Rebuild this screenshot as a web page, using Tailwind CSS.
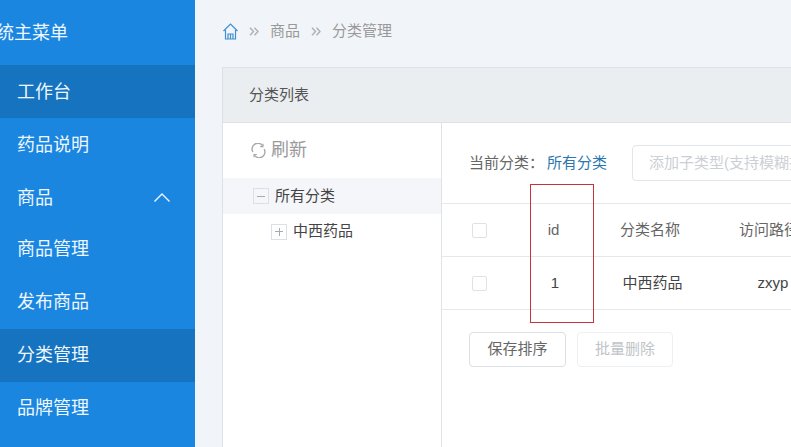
<!DOCTYPE html>
<html lang="zh">
<head>
<meta charset="utf-8">
<script src="https://cdn.jsdelivr.net/npm/@tailwindcss/browser@4"></script>
</head>
<body class="m-0 overflow-hidden">
<div class="relative flex w-[791px] h-[447px] overflow-hidden bg-[#f1f4f8] font-['Liberation_Sans','Noto_Sans_CJK_SC',sans-serif]">
  <aside class="w-[195px] shrink-0 bg-[#1a86e0] text-[#eef7ff] text-lg overflow-hidden">
    <div class="h-[65px] flex items-center justify-end pr-[127px] whitespace-nowrap text-[18px]">系统主菜单</div>
    <div class="h-[53px] flex items-center pl-[17px] bg-[#1573bf]">工作台</div>
    <div class="h-[53px] flex items-center pl-[17px]">药品说明</div>
    <div class="h-[53px] flex items-center justify-between pl-[17px] pr-[25px]">
      <span>商品</span>
      <svg width="16" height="9" viewBox="0 0 16 9" fill="none" stroke="#eef7ff" stroke-width="1.4"><path d="M0.5 8.5L8 1l7.5 7.5"/></svg>
    </div>
    <div class="h-[53px] pb-1 flex items-center pl-[17px]">商品管理</div>
    <div class="h-[52px] pb-[2px] flex items-center pl-[17px]">发布商品</div>
    <div class="h-[53px] pb-[2px] flex items-center pl-[17px] bg-[#1573bf]">分类管理</div>
    <div class="h-[53px] pb-[2px] flex items-center pl-[17px]">品牌管理</div>
  </aside>
  <main class="flex-1 min-w-0 pl-[27px]">
    <nav class="h-[67px] pb-[4px] flex items-center text-[15px] text-[#999999] whitespace-nowrap">
      <svg class="ml-[1px] mr-[11px]" width="15" height="17" viewBox="0 0 15 17" fill="none" stroke="#3f8fd2" stroke-width="1.2"><path d="M0.5 8L7.5 1l7 7"/><path d="M2.5 7v9h10V7"/><path d="M5 16v-5h5v5M7.5 11v5"/></svg>
      <svg class="mr-[11px]" width="10" height="9" viewBox="0 0 10 9" fill="none" stroke="#b0b0b0" stroke-width="1.4"><path d="M1 0.8L4.5 4.5 1 8.2M5.5 0.8L9 4.5 5.5 8.2"/></svg>
      <span>商品</span>
      <svg class="mx-[11px]" width="10" height="9" viewBox="0 0 10 9" fill="none" stroke="#b0b0b0" stroke-width="1.4"><path d="M1 0.8L4.5 4.5 1 8.2M5.5 0.8L9 4.5 5.5 8.2"/></svg>
      <span>分类管理</span>
    </nav>
    <section class="w-[620px] h-[380px] border-l border-t border-[#dde2e7] bg-white">
      <header class="h-[55px] pl-[26px] flex items-center bg-[#eaeef1] border-b border-[#dde2e7] text-[15px] text-[#555555]">分类列表</header>
      <div class="flex h-[325px]">
        <div class="w-[219px] shrink-0 border-r border-[#dde2e7]">
          <div class="h-[55px] pl-[28px] pb-[1px] flex items-center gap-[5px] text-[#9a9a9a] text-[18px]">
            <svg width="15" height="15" viewBox="0 0 16 16" fill="none" stroke="#a8a8a8" stroke-width="1.5"><path d="M2 9.5A6 6 0 0 1 12.5 3.2"/><path d="M14 6.5A6 6 0 0 1 3.5 12.8"/><path d="M12.8 0.8v3h-3M3.2 15.2v-3h3" stroke-width="1.2"/></svg>
            <span>刷新</span>
          </div>
          <div class="h-9 pl-[30px] flex items-center gap-[6px] bg-[#f4f6f9] text-[15px] text-[#444444]">
            <span class="w-4 h-4 border border-[#dcdfe3] flex items-center justify-center"><span class="w-2 h-px bg-[#aaaaaa]"></span></span>
            <span>所有分类</span>
          </div>
          <div class="h-9 pb-[1px] pl-[48px] flex items-center gap-[6px] text-[15px] text-[#444444]">
            <span class="relative w-4 h-4 border border-[#dcdfe3] flex items-center justify-center"><span class="w-2 h-px bg-[#aaaaaa]"></span><span class="absolute w-px h-2 bg-[#aaaaaa]"></span></span>
            <span>中西药品</span>
          </div>
        </div>
        <div class="flex-1 min-w-0">
          <div class="h-[80px] pl-[27px] flex items-center text-[15px] whitespace-nowrap">
            <span class="text-[#666666] w-[78px]">当前分类：</span><span class="text-[#2a76b0] pl-[3px]">所有分类</span>
            <div class="ml-[25px] w-[300px] h-[36px] border border-[#e2e5e9] rounded-[4px] pl-4 flex items-center text-[#ccd0d5]">添加子类型(支持模糊搜索)</div>
          </div>
          <div class="grid grid-cols-[80px_63px_132px_112px] h-[53px] border-t border-[#e8e8e8] items-center text-[15px] text-[#666666] text-center">
            <div class="pl-[30px]"><span class="block w-[15px] h-[15px] border border-[#dfe2e5] rounded-[2px]"></span></div>
            <div>id</div>
            <div class="pr-[2px]">分类名称</div>
            <div class="whitespace-nowrap pr-[8px]">访问路径</div>
          </div>
          <div class="grid grid-cols-[80px_63px_132px_112px] h-[54px] border-t border-b border-[#e8e8e8] items-center text-[15px] text-[#444444] text-center">
            <div class="pl-[30px]"><span class="block w-[15px] h-[15px] border border-[#dfe2e5] rounded-[2px]"></span></div>
            <div class="pl-[3px]">1</div>
            <div class="pl-[3px]">中西药品</div>
            <div>zxyp</div>
          </div>
          <div class="pl-[27px] pt-[22px] flex gap-[11px] text-[15px]">
            <button class="w-[97px] h-[35px] border border-[#dcdfe3] rounded-[4px] bg-white text-[#666666]">保存排序</button>
            <button class="w-[96px] h-[35px] border border-[#eeeff1] rounded-[4px] bg-white text-[#c0c4c8]">批量删除</button>
          </div>
        </div>
      </div>
    </section>
  </main>
  <div class="absolute left-[530px] top-[184px] w-[64px] h-[139px] border border-[#c8323c]"></div>
</div>
</body>
</html>
